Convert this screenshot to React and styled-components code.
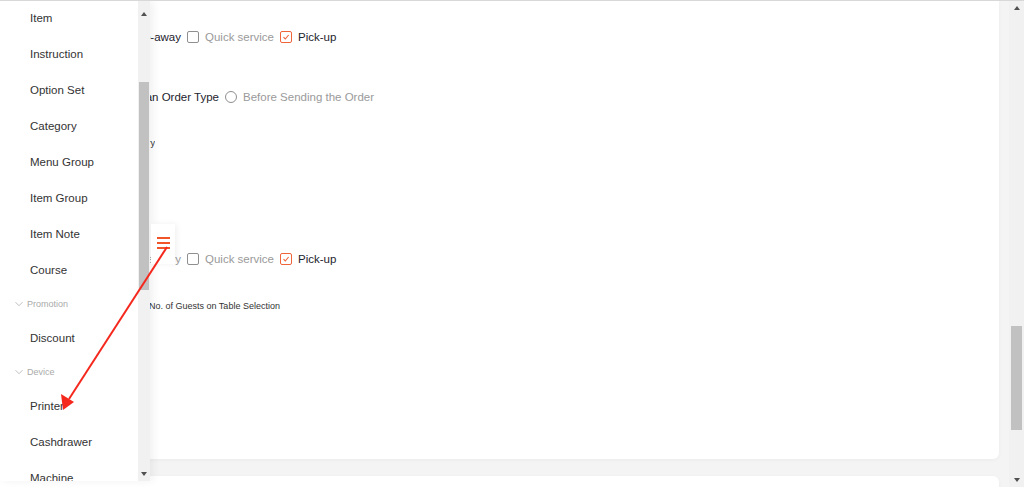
import React from "react";
import styled, { createGlobalStyle } from "styled-components";

const Global = createGlobalStyle`
  html, body {
    margin: 0;
    padding: 0;
    height: 487px;
    overflow: hidden;
    font-family: "Liberation Sans", Arial, sans-serif;
    background: #f4f4f4;
  }
`;

const menu = [
  { label: "Item" },
  { label: "Instruction" },
  { label: "Option Set" },
  { label: "Category" },
  { label: "Menu Group" },
  { label: "Item Group" },
  { label: "Item Note" },
  { label: "Course" },
  { group: "Promotion" },
  { label: "Discount" },
  { group: "Device" },
  { label: "Printer" },
  { label: "Cashdrawer" },
  { label: "Machine" },
];

const Page = styled.div`
  display: flex;
  height: 487px;
  border-top: 1px solid #d8d8d8;
  box-sizing: border-box;
`;

const Viewport = styled.div`
  flex: 1;
  position: relative;
  overflow: hidden;
  background: #f4f4f4;
`;

const Content = styled.div`
  display: flex;
  flex-direction: column;
  gap: 17px;
  padding-right: 10px;
`;

const Card = styled.div`
  background: #fff;
  height: ${(p) => p.h}px;
  border-radius: ${(p) => (p.top ? "6px 6px 0 0" : "0 0 6px 0")};
  box-shadow: 0 1px 4px rgba(0, 0, 0, 0.04);
  display: flex;
  flex-direction: column;
`;

const Row = styled.div`
  display: flex;
  align-items: center;
  height: ${(p) => p.h || 18}px;
  margin-top: ${(p) => p.mt}px;
  white-space: nowrap;
`;

const Lead = styled.div`
  width: ${(p) => p.w}px;
  flex: none;
  display: flex;
  justify-content: flex-end;
  align-items: center;
  overflow: hidden;
`;

const Option = styled.label`
  display: flex;
  align-items: center;
  gap: 6px;
  margin-right: 6px;
  font-size: 11.5px;
  color: ${(p) => (p.dim ? "#9a9a9a" : "#23232d")};
`;

const Box = styled.span`
  width: 12px;
  height: 12px;
  box-sizing: border-box;
  border: 1px solid ${(p) => (p.on ? "#f0643a" : "#8f8f8f")};
  border-radius: ${(p) => (p.round ? "50%" : "2px")};
  display: flex;
  align-items: center;
  justify-content: center;
  background: #fff;
  flex: none;
`;

const Note = styled.span`
  font-size: 9px;
  color: #333;
`;

const Sidebar = styled.aside`
  position: absolute;
  left: 0;
  top: 0;
  bottom: 6px;
  width: 150px;
  display: flex;
  background: #fff;
  box-shadow: 3px 0 8px rgba(0, 0, 0, 0.06);
  z-index: 2;
`;

const MenuList = styled.ul`
  list-style: none;
  margin: -1px 0 0;
  padding: 0;
  width: 138px;
  flex: none;
  overflow: hidden;
`;

const MenuItem = styled.li`
  height: 36px;
  line-height: 36px;
  padding-left: 30px;
  font-size: 11.5px;
  color: #333;
`;

const GroupHead = styled.li`
  height: 32px;
  display: flex;
  align-items: center;
  gap: 4px;
  padding-left: 15px;
  font-size: 9px;
  color: #aaa;
`;

const Scrollbar = styled.div`
  width: ${(p) => p.w}px;
  flex: none;
  background: #f1f1f1;
  display: flex;
  flex-direction: column;
  align-items: center;
  padding-top: ${(p) => p.pt || 0}px;
  box-sizing: border-box;
`;

const Arrow = styled.div`
  height: 14px;
  width: 100%;
  display: flex;
  align-items: center;
  justify-content: center;
  &::after {
    content: "";
    border-left: 3.5px solid transparent;
    border-right: 3.5px solid transparent;
    ${(p) => (p.down ? "border-top" : "border-bottom")}: 4px solid #505050;
  }
`;

const Track = styled.div`
  flex: 1;
  width: 100%;
  display: flex;
  justify-content: center;
`;

const Thumb = styled.div`
  width: ${(p) => p.w}px;
  height: ${(p) => p.h}px;
  margin-top: ${(p) => p.top}px;
  background: #c1c1c1;
`;

const Toggle = styled.button`
  position: absolute;
  left: 151px;
  top: 223px;
  width: 24px;
  height: 40px;
  border: none;
  background: #fff;
  box-shadow: 2px 0 6px rgba(0, 0, 0, 0.06);
  display: flex;
  flex-direction: column;
  align-items: center;
  justify-content: center;
  gap: 3.5px;
  padding: 0 0 2px;
  z-index: 2;
  & span {
    display: block;
    width: 13px;
    height: 1.5px;
    background: #f2542a;
  }
`;

const Overlay = styled.svg`
  position: absolute;
  left: 0;
  top: 0;
  pointer-events: none;
  z-index: 3;
`;

const Check = () => (
  <svg width="8" height="8" viewBox="0 0 8 8">
    <path d="M1.5 4.2 L3.3 6 L6.6 2" fill="none" stroke="#f0643a" strokeWidth="1.1" />
  </svg>
);

const Chevron = () => (
  <svg width="8" height="6" viewBox="0 0 8 6">
    <path d="M0.5 1.2 L4 4.7 L7.5 1.2" fill="none" stroke="#b8b8b8" strokeWidth="0.9" />
  </svg>
);

const Opt = ({ on, dim, round, children }) => (
  <Option dim={dim}>
    <Box on={on} round={round}>{on && !round && <Check />}</Box>
    {children}
  </Option>
);

export default function App() {
  return (
    <Page>
      <Global />
      <Viewport>
        <Content>
          <Card h={458}>
            <Row mt={27}>
              <Lead w={187}>
                <Opt on>Dine-in</Opt>
                <Opt on>Take-away</Opt>
              </Lead>
              <Opt dim>Quick service</Opt>
              <Opt on>Pick-up</Opt>
            </Row>
            <Row mt={42}>
              <Lead w={225}>
                <Opt round>After Selecting an Order Type</Opt>
              </Lead>
              <Opt round dim>Before Sending the Order</Opt>
            </Row>
            <Row h={12} mt={31}>
              <Lead w={155}>
                <Note>Set the default order type for delivery</Note>
              </Lead>
            </Row>
            <Row mt={101}>
              <Lead w={187}>
                <Opt dim>Delivery</Opt>
              </Lead>
              <Opt dim>Quick service</Opt>
              <Opt on>Pick-up</Opt>
            </Row>
            <Row h={12} mt={32}>
              <Lead w={149} />
              <Note>No. of Guests on Table Selection</Note>
            </Row>
          </Card>
          <Card h={40} top />
        </Content>

        <Sidebar>
          <MenuList>
            {menu.map((m) =>
              m.group ? (
                <GroupHead key={m.group}>
                  <Chevron />
                  {m.group}
                </GroupHead>
              ) : (
                <MenuItem key={m.label}>{m.label}</MenuItem>
              )
            )}
          </MenuList>
          <Scrollbar w={12} pt={6}>
            <Arrow />
            <Track>
              <Thumb w={10} h={208} top={61} />
            </Track>
            <Arrow down />
          </Scrollbar>
        </Sidebar>

        <Toggle>
          <span />
          <span />
          <span />
        </Toggle>

        <Overlay width="300" height="487">
          <line x1="167" y1="246" x2="69" y2="398" stroke="#f5281e" strokeWidth="2" />
          <polygon points="63,409 61,393 74,401" fill="#f5281e" />
        </Overlay>
      </Viewport>
      <Scrollbar w={15} pt={0}>
        <Arrow />
        <Track>
          <Thumb w={11} h={104} top={311} />
        </Track>
        <Arrow down />
      </Scrollbar>
    </Page>
  );
}
